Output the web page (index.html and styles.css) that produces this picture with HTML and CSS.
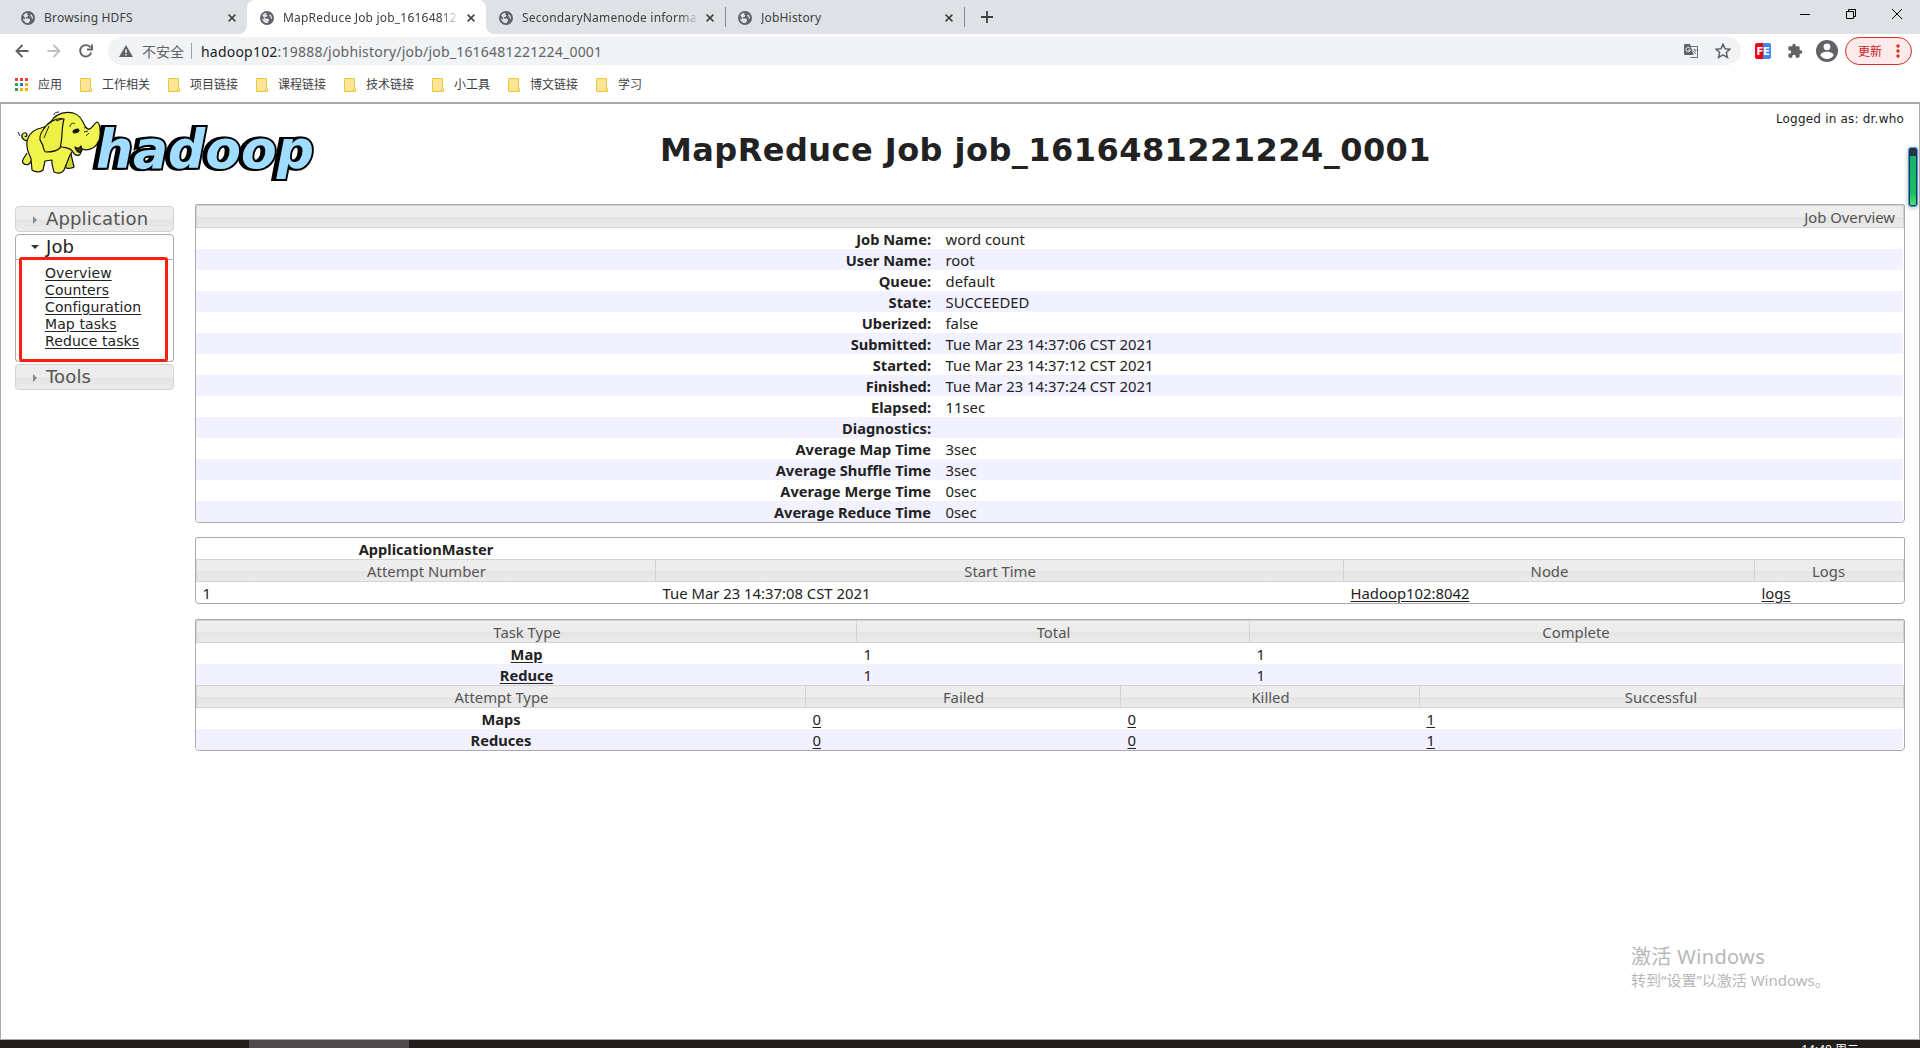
FILE: index.html
```html
<!DOCTYPE html>
<html lang="zh-CN">
<head>
<meta charset="utf-8">
<title>MapReduce Job job_1616481221224_0001</title>
<link rel="stylesheet" href="styles.css">
</head>
<body>
<svg width="0" height="0" class="defs" aria-hidden="true">
  <symbol id="globe" viewBox="0 0 14 14"><circle cx="7" cy="7" r="7" fill="#5f6368"/><path d="M2.200 4.200C3.500 2.600 5 2 6.800 2L6 3.600l1.500.8L6.300 6H4.800v1.400h3l1.200 1v1.400L7.600 12C4 12 2 9.600 2 7.200l1.800 1.600V6.600z" fill="#dfe2e7" fill-rule="evenodd"/><path d="M10 3.200c1.600 1.200 2.300 3 1.900 5l-1.300-1V5.800L9 5z" fill="#dfe2e7"/></symbol>
  <symbol id="close" viewBox="0 0 8 8"><path d="M.6.6l6.800 6.800M7.400.6L.6 7.400" stroke="#3c4043" stroke-width="1.500"/></symbol>
  <symbol id="folder" viewBox="0 0 12 14"><path d="M.5.5h10v9l1 1v3H.5z" fill="#ffe592" stroke="#e8c84b"/><path d="M9.500 13v-3l1-.8" fill="none" stroke="#e8c84b"/></symbol>
</svg>
<div class="tabs">
  <div class="tab"><svg class="globe"><use href="#globe"/></svg><span class="tab-title">Browsing HDFS</span><svg class="close"><use href="#close"/></svg></div>
  <div class="tab active"><svg class="globe"><use href="#globe"/></svg><span class="tab-title fade">MapReduce Job job_1616481221224_0001</span><svg class="close"><use href="#close"/></svg></div>
  <div class="tab sep"><svg class="globe"><use href="#globe"/></svg><span class="tab-title fade">SecondaryNamenode information</span><svg class="close"><use href="#close"/></svg></div>
  <div class="tab sep"><svg class="globe"><use href="#globe"/></svg><span class="tab-title">JobHistory</span><svg class="close"><use href="#close"/></svg></div>
  <svg class="plus" viewBox="0 0 12 12"><path d="M6 0v12M0 6h12" stroke="#3c4043" stroke-width="1.800"/></svg>
  <svg class="winctl" width="102" height="12" viewBox="0 0 102 12" fill="none" stroke="#000"><path d="M0 6.500h10M46.500 3.500h7v7h-7zM48.500 3.500v-2h7v7h-2M92 1l10 10M102 1L92 11"/></svg>
</div>
<div class="toolbar">
  <svg class="nav" width="94" height="16" viewBox="0 0 94 16" fill="none" stroke-width="1.900">
    <path d="M14.500 8h-12M8.500 2l-6 6 6 6" stroke="#5f6368"/>
    <path d="M33.500 8h12M39.500 2l6 6-6 6" stroke="#bdc1c6"/>
    <path d="M76.500 4.500A5.700 5.700 0 1 0 77.300 9.500M78 1.500v5h-5" stroke="#5f6368"/>
  </svg>
  <div class="omnibox">
    <svg class="warn" viewBox="0 0 14 12"><path d="M7 0l7 12H0z" fill="#5f6368"/><path d="M6.200 4.500h1.600v3.500H6.200zM6.200 9h1.600v1.500H6.200z" fill="#f1f3f4"/></svg>
    <span class="insecure">不安全</span><i class="bar"></i>
    <span class="url"><b>hadoop102</b>:19888/jobhistory/job/job_1616481221224_0001</span>
    <svg class="trans" viewBox="0 0 14 14"><path d="M6 2.500h7.500v11H6.500" fill="#f1f3f4" stroke="#6b6f73"/><path d="M0 1a1 1 0 0 1 1-1h5l3.500 11H1a1 1 0 0 1-1-1z" fill="#5f6368"/><path d="M6 4.300A2.200 2.200 0 1 0 6.300 6H4.200" fill="none" stroke="#fff"/><path d="M8.500 6h4M10.500 4.800V6M11.800 6c-.3 2-1.600 3.200-2.500 3.800M9.400 7.200l2.600 3" fill="none" stroke="#6b6f73" stroke-width=".8"/></svg>
    <svg class="star" viewBox="0 0 14 14"><path d="M7 1l1.800 4 4.400.4-3.300 2.900 1 4.300L7 10.300l-3.900 2.300 1-4.300L.8 5.400 5.200 5z" fill="none" stroke="#5f6368" stroke-width="1.300"/></svg>
  </div>
  <div class="fe">FE</div>
  <svg class="puzzle" viewBox="0 0 24 24"><path fill="#5f6368" d="M20.500 11H19V7a2 2 0 0 0-2-2h-4V3.500a2.500 2.500 0 0 0-5 0V5H4a2 2 0 0 0-2 2v3.800h1.500a2.700 2.700 0 0 1 0 5.400H2V20a2 2 0 0 0 2 2h3.800v-1.500a2.700 2.700 0 0 1 5.400 0V22H17a2 2 0 0 0 2-2v-4h1.500a2.500 2.500 0 0 0 0-5z"/></svg>
  <svg class="avatar" viewBox="0 0 22 22"><circle cx="11" cy="11" r="11" fill="#5f6368"/><circle cx="11" cy="6.800" r="3.400" fill="#fff"/><path d="M4.500 15.500c0-5 13-5 13 0-2.500 4.500-10.500 4.500-13 0z" fill="#fff"/></svg>
  <div class="update"><span>更新</span><svg width="4" height="14" viewBox="0 0 4 14" fill="#d93025"><circle cx="2" cy="2" r="1.700"/><circle cx="2" cy="7" r="1.700"/><circle cx="2" cy="12" r="1.700"/></svg></div>
</div>
<div class="bookmarks">
  <svg class="apps" viewBox="0 0 13 13"><path d="M0 0h3v3H0zM5 0h3v3H5zM10 0h3v3h-3z" fill="#ea4335"/><path d="M0 5h3v3H0zM0 10h3v3H0z" fill="#34a056"/><path d="M5 5h3v3H5z" fill="#1a73e8"/><path d="M10 5h3v3h-3zM5 10h3v3H5zM10 10h3v3h-3z" fill="#fbab05"/></svg><span>应用</span>
  <svg class="folder"><use href="#folder"/></svg><span>工作相关</span>
  <svg class="folder"><use href="#folder"/></svg><span>项目链接</span>
  <svg class="folder"><use href="#folder"/></svg><span>课程链接</span>
  <svg class="folder"><use href="#folder"/></svg><span>技术链接</span>
  <svg class="folder"><use href="#folder"/></svg><span>小工具</span>
  <svg class="folder"><use href="#folder"/></svg><span>博文链接</span>
  <svg class="folder"><use href="#folder"/></svg><span>学习</span>
</div>
<div class="page">
  <header>
    <svg class="logo" width="306" height="76" viewBox="14 108 306 76">
      <text class="wordmark" x="96" y="168" textLength="218" lengthAdjust="spacingAndGlyphs">hadoop</text>
      <g stroke="#111" stroke-width="1.200" stroke-linejoin="round">
        <path d="M29 141c-4 0-8-2-7-6 1-3 5-3 5 0 0 2-2 2-2 1M27 153c-2 4-6 7-4 10 3 3 7 2 8-2" fill="#e9ed45"/>
        <path d="M64 154l2 14c2 1 7 0 8-1l-4-17z" fill="#cfd52c"/>
        <path d="M41 128c-10 2-15 10-14 18 0 6 3 9 4 13l1 11c4 3 9 2 11 0l2-9 7-1c-1 4 1 7 2 12 4 2 9 1 10-2l6-15c4-5 5-10 4-15 0-12-20-18-33-12z" fill="#f0f44c"/>
        <path d="M50 123c8-14 28-14 33-1 2 4 3 7 5 7 4 1 5-5 9-7 4 1 4 16 1 20-3 7-12 10-18 6l1 4c-1 5-6 4-8 0-2-4-6-4-11-5-13-3-21-12-12-24z" fill="#f1f54f"/>
        <path d="M64 119c-8-2-17 4-21 11-3 4-4 9-2 12 3 3 2 10 5 10 6 0 11-1 14-4 3-10 1-18 4-29z" fill="#edf145"/>
        <path d="M75 147c2 2 5 1 6-1l1 4c-1 4-5 3-7-3z" fill="#432"/>
        <path d="M70 127c0-3 3-5 5-3M84 128c2-1 4 0 5 2M84 132l4-1M86 136l3-3M54 115c0-2 2-3 5-3M18 132l2 4M49 126l-5 12M56 121l6-2" fill="none" stroke-width=".9"/>
        <ellipse cx="76" cy="131" rx="3" ry="1.600" transform="rotate(-20 76 131)" fill="#111"/>
      </g>
    </svg>
    <h1>MapReduce Job job_1616481221224_0001</h1>
    <div class="user">Logged in as: dr.who</div>
  </header>
  <div class="body">
    <nav>
      <div class="acc"><i class="tri"></i>Application</div>
      <div class="acc open"><i class="tri"></i>Job</div>
      <ul><li><a>Overview</a></li><li><a>Counters</a></li><li><a>Configuration</a></li><li><a>Map tasks</a></li><li><a>Reduce tasks</a></li></ul>
      <div class="acc"><i class="tri"></i>Tools</div>
      <div class="highlight"></div>
    </nav>
    <main>
      <section class="info">
        <div class="head title">Job Overview</div>
        <div class="row"><b>Job Name:</b><span>word count</span></div>
        <div class="row alt"><b>User Name:</b><span>root</span></div>
        <div class="row"><b>Queue:</b><span>default</span></div>
        <div class="row alt"><b>State:</b><span>SUCCEEDED</span></div>
        <div class="row"><b>Uberized:</b><span>false</span></div>
        <div class="row alt"><b>Submitted:</b><span>Tue Mar 23 14:37:06 CST 2021</span></div>
        <div class="row"><b>Started:</b><span>Tue Mar 23 14:37:12 CST 2021</span></div>
        <div class="row alt"><b>Finished:</b><span>Tue Mar 23 14:37:24 CST 2021</span></div>
        <div class="row"><b>Elapsed:</b><span>11sec</span></div>
        <div class="row alt"><b>Diagnostics:</b><span></span></div>
        <div class="row"><b>Average Map Time</b><span>3sec</span></div>
        <div class="row alt"><b>Average Shuffle Time</b><span>3sec</span></div>
        <div class="row"><b>Average Merge Time</b><span>0sec</span></div>
        <div class="row alt"><b>Average Reduce Time</b><span>0sec</span></div>
      </section>
      <section class="master">
        <div class="row"><b>ApplicationMaster</b></div>
        <div class="row head"><span>Attempt Number</span><span>Start Time</span><span>Node</span><span>Logs</span></div>
        <div class="row"><span>1</span><span>Tue Mar 23 14:37:08 CST 2021</span><span><a>Hadoop102:8042</a></span><span><a>logs</a></span></div>
      </section>
      <section class="tasks">
        <div class="row head type"><span>Task Type</span><span>Total</span><span>Complete</span></div>
        <div class="row type"><b><a>Map</a></b><span>1</span><span>1</span></div>
        <div class="row type alt"><b><a>Reduce</a></b><span>1</span><span>1</span></div>
        <div class="row head attempt"><span>Attempt Type</span><span>Failed</span><span>Killed</span><span>Successful</span></div>
        <div class="row attempt"><b>Maps</b><span><a>0</a></span><span><a>0</a></span><span><a>1</a></span></div>
        <div class="row attempt alt"><b>Reduces</b><span><a>0</a></span><span><a>0</a></span><span><a>1</a></span></div>
      </section>
    </main>
  </div>
</div>
<div class="taskbar"><div class="task"></div><span class="clock">14:40 周二</span></div>
<div class="watermark"><p>激活 Windows</p><p class="small">转到“设置”以激活 Windows。</p></div>
<div class="meter"></div>
</body>
</html>
```
FILE: styles.css
```css
* { box-sizing: border-box; }
body { margin: 0; height: 1048px; overflow: hidden; position: relative; display: flex; flex-direction: column; background: #fff; color: #222; font-family: "Noto Sans", "Noto Sans CJK SC", sans-serif; }
svg { flex: none; display: block; }
.defs { position: absolute; }

/* Browser frame */
.tabs { height: 34px; flex: none; background: #dee1e6; display: flex; padding-left: 8px; align-items: stretch; }
.tab { width: 239px; display: flex; align-items: center; padding: 1px 11px 0 13px; font-size: 12px; color: #3c4043; position: relative; }
.tab.active { background: #fff; border-radius: 8px 8px 0 0; }
.tab.active::before, .tab.active::after { content: ""; position: absolute; bottom: 0; width: 8px; height: 8px; }
.tab.active::before { left: -8px; background: radial-gradient(circle at 0 0, transparent 7.5px, #fff 8px); }
.tab.active::after { right: -8px; background: radial-gradient(circle at 100% 0, transparent 7.5px, #fff 8px); }
.tab.sep::after { content: ""; position: absolute; right: -1px; top: 7px; height: 20px; width: 1px; background: #84888c; }
.globe { width: 14px; height: 14px; }
.tab-title { margin-left: 9px; width: 174px; overflow: hidden; white-space: nowrap; letter-spacing: .2px; }
.fade { -webkit-mask-image: linear-gradient(90deg, #000 158px, transparent 176px); mask-image: linear-gradient(90deg, #000 158px, transparent 176px); }
.close { width: 8px; height: 8px; margin-left: auto; }
.plus { width: 12px; height: 12px; margin: 11px 0 0 17px; }
.winctl { margin: 8px 18px 0 auto; }
.toolbar { height: 35px; flex: none; display: flex; align-items: center; padding: 0 8px 1px 14px; }
.nav { width: 94px; }
.omnibox { width: 1633px; height: 28px; border-radius: 14px; background: #f1f3f4; display: flex; align-items: center; padding: 0 10px 0 11px; font-size: 14px; color: #5f6368; }
.warn { width: 14px; height: 12px; }
.insecure { margin-left: 9px; }
.bar { width: 1px; height: 16px; background: #9aa0a6; margin: 0 9px 0 7px; }
.url { letter-spacing: .21px; }
.url b { font-weight: 400; color: #202124; }
.trans { width: 14px; height: 14px; margin-left: auto; }
.star { width: 16px; height: 16px; margin-left: 17px; }
.fe { margin-left: 14px; width: 16px; height: 16px; border-radius: 2px; background: linear-gradient(90deg, #f00010 50%, #4285f4 50%); color: #fff; font: bold 10px/17px "DejaVu Sans", sans-serif; text-align: center; letter-spacing: -.3px; white-space: nowrap; }
.puzzle { width: 16px; height: 16px; margin-left: 16px; }
.avatar { width: 22px; height: 22px; margin-left: 13px; }
.update { margin-left: 7px; width: 67px; height: 28px; border: 1px solid #d93025; border-radius: 14px; background: #fcebea; color: #c5221f; font-size: 12px; display: flex; align-items: center; justify-content: space-between; padding: 0 11px 0 12px; }
.bookmarks { height: 33px; flex: none; display: flex; align-items: center; padding: 0 15px 2px; font-size: 12px; color: #3c4043; white-space: nowrap; }
.bookmarks span { margin: 0 18px 0 10px; line-height: 16px; }
.folder { width: 12px; height: 14px; }
.apps { width: 13px; height: 13px; }

/* Hadoop page */
.page { height: 938px; flex: none; border: 1px solid #a9a9a9; border-top: 2px solid #aaa; font-size: 14.85px; }
header { height: 100px; display: flex; font-family: "DejaVu Sans", sans-serif; }
.logo { margin: 4px 0 0 13px; overflow: visible; }
.wordmark { font: italic bold 54px "DejaVu Sans", sans-serif; fill: #9fdcff; stroke: #000; stroke-width: 4px; paint-order: stroke; filter: drop-shadow(-3px 0 0 #000); }
h1 { margin: 27px 0 0 340px; font-size: 32px; line-height: 39px; letter-spacing: .46px; white-space: nowrap; }
.user { font-size: 12px; line-height: 15px; letter-spacing: .2px; margin: 8px 15px 0 auto; }
.body { display: flex; padding: 0 14px; }
nav { width: 159px; flex: none; margin: 2px 21px 0 0; position: relative; font-family: "DejaVu Sans", sans-serif; }
.acc { height: 26px; margin-bottom: 2px; padding-left: 30px; border: 1px solid #d3d3d3; border-radius: 4px; font-size: 18px; line-height: 24px; letter-spacing: .15px; color: #555; background: linear-gradient(#ededed 50%, #e4e4e4 55%, #ebebeb); position: relative; }
.tri { position: absolute; left: 17px; top: 9px; border: 4px solid transparent; border-left-color: #888; border-right: 0; }
.open { margin: 0; background: #fff; color: #222; border-color: #aaa; border-radius: 4px 4px 0 0; }
.open .tri { left: 15px; top: 10px; border: 4px solid transparent; border-top-color: #333; border-bottom: 0; }
ul { list-style: none; height: 102px; margin: 0 0 2px; padding: 5px 0 0 29px; border: 1px solid #aaa; border-top: 0; border-radius: 0 0 4px 4px; font-size: 14px; line-height: 17px; letter-spacing: .1px; }
a { text-decoration: underline; text-underline-offset: 2px; }
.highlight { position: absolute; left: 4px; top: 51px; width: 149px; height: 105px; border: 3px solid #fb1d10; border-radius: 3px; }
main { flex: 1; }
section { border: 1px solid #aaa; border-radius: 2px 2px 4px 4px; overflow: hidden; line-height: 22px; }
.row { height: 21px; display: grid; white-space: nowrap; padding-right: 1px; }
.row > span { padding-left: 6.5px; }
.row > b { text-align: center; font-size: 14.65px; }
.alt { background: #f1f1ff; background-clip: content-box; }
.head { height: 23px; border: 1px solid #d3d3d3; background: linear-gradient(#ededed 50%, #e4e4e4 55%, #ebebeb); color: #555; text-align: center; padding: 0; }
.head > span { padding: 0 1px 0 0; margin-left: -1px; border-left: 1px solid transparent; }
.head > span + span { margin-left: -2px; border-left-color: #d3d3d3; }
.title { text-align: right; padding-right: 8px; }
.info { height: 319px; }
.info .row { grid-template-columns: 743px 1fr; }
.info .row > b { text-align: right; padding-right: 8px; }
.master { margin-top: 14px; height: 67px; }
.master .row { grid-template-columns: 460px 688px 411px 1fr; }
.tasks { margin-top: 15px; height: 132px; }
.type { grid-template-columns: 661px 393px 1fr; }
.attempt { grid-template-columns: 610px 315px 299px 1fr; }
.taskbar { flex: 1; background: #211e1e; display: flex; overflow: hidden; color: #fff; }
.task { margin-left: 249px; width: 160px; background: #4d4b4b; }
.clock { margin: 3px 61px 0 auto; font-size: 12px; line-height: 14px; }

/* Desktop overlays */
.watermark { position: absolute; left: 1631px; top: 943px; color: #b7b7b7; white-space: nowrap; font-size: 20px; line-height: 28px; letter-spacing: .35px; }
.watermark p { margin: 0; }
.watermark .small { font-size: 15px; line-height: 19px; letter-spacing: 0; }
.meter { position: absolute; left: 1908px; top: 147px; width: 10px; height: 60px; border: 1px solid #3aa0f5; border-radius: 3px; background: linear-gradient(#303040 8px, #16b364 8px, #19bd5f 45px, #5fe070); box-shadow: inset 0 0 0 1px #20304a, 0 1px 5px #bbb; }
```
